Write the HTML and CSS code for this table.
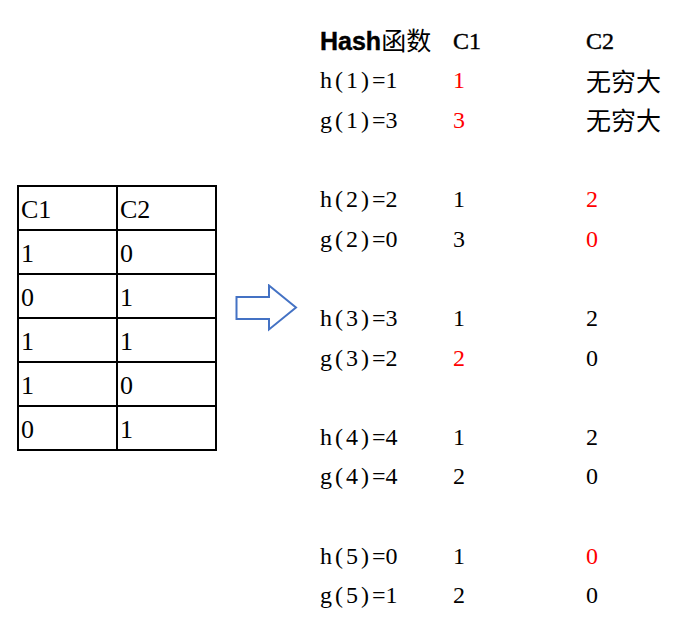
FILE: index.html
```html
<!DOCTYPE html>
<html>
<head>
<meta charset="utf-8">
<link rel="stylesheet" href="styles.css">
</head>
<body>
<div class="page">
  <div class="left">
    <table class="data">
      <tr><td>C1</td><td>C2</td></tr>
      <tr><td>1</td><td>0</td></tr>
      <tr><td>0</td><td>1</td></tr>
      <tr><td>1</td><td>1</td></tr>
      <tr><td>1</td><td>0</td></tr>
      <tr><td>0</td><td>1</td></tr>
    </table>
    <svg class="arrow" width="64" height="48" viewBox="0 0 64 48">
      <polygon points="1.5,13 34,13 34,1.5 61,23.5 34,45.5 34,35 1.5,35" fill="none" stroke="#4472c4" stroke-width="2"/>
    </svg>
  </div>
  <div class="hash">
    <div class="h-label hdr"><b class="sans">Hash</b><span class="cjk">函数</span></div><div class="hdr">C1</div><div class="hdr">C2</div>
    <div>h<span class="p">(</span>1<span class="p">)</span>=1</div><div class="red">1</div><div class="cjk">无穷大</div>
    <div>g<span class="p">(</span>1<span class="p">)</span>=3</div><div class="red">3</div><div class="cjk">无穷大</div>
    <div class="blank"></div><div></div><div></div>
    <div>h<span class="p">(</span>2<span class="p">)</span>=2</div><div>1</div><div class="red">2</div>
    <div>g<span class="p">(</span>2<span class="p">)</span>=0</div><div>3</div><div class="red">0</div>
    <div class="blank"></div><div></div><div></div>
    <div>h<span class="p">(</span>3<span class="p">)</span>=3</div><div>1</div><div>2</div>
    <div>g<span class="p">(</span>3<span class="p">)</span>=2</div><div class="red">2</div><div>0</div>
    <div class="blank"></div><div></div><div></div>
    <div>h<span class="p">(</span>4<span class="p">)</span>=4</div><div>1</div><div>2</div>
    <div>g<span class="p">(</span>4<span class="p">)</span>=4</div><div>2</div><div>0</div>
    <div class="blank"></div><div></div><div></div>
    <div>h<span class="p">(</span>5<span class="p">)</span>=0</div><div>1</div><div class="red">0</div>
    <div>g<span class="p">(</span>5<span class="p">)</span>=1</div><div>2</div><div>0</div>
  </div>
</div>
</body>
</html>
```
FILE: styles.css
```css
html, body { margin: 0; padding: 0; background: #fff; }
body { width: 673px; height: 628px; overflow: hidden; font-family: "Liberation Serif", "Noto Sans CJK SC", serif; color: #000; }
.page { display: flex; align-items: flex-start; }
.left { flex: none; width: 320px; box-sizing: border-box; display: flex; align-items: flex-start; padding: 185px 0 0 17px; gap: 18px; }
.data { border-collapse: collapse; font-size: 26px; }
.data td { border: 2px solid #000; width: 99px; height: 44px; padding: 3px 0 0 2px; box-sizing: border-box; vertical-align: middle; line-height: 1; }
.arrow { display: block; margin-top: 99px; }
.hash { display: grid; grid-template-columns: 133px 133px 100px; grid-auto-rows: 39.6px; margin-top: 21px; font-size: 24px; align-items: center; }
.hash > div { line-height: 1; white-space: nowrap; }
.sans { font-family: "Liberation Sans", sans-serif; font-weight: bold; font-size: 25px; }
.cjk { font-family: "Noto Sans CJK SC", sans-serif; font-size: 25px; }
.hdr { font-weight: normal; -webkit-text-stroke: 0.4px #000; }
.hdr .cjk { -webkit-text-stroke: 0; }
.p { margin: 0 3px; }
.red { color: #ff0000; }
```
